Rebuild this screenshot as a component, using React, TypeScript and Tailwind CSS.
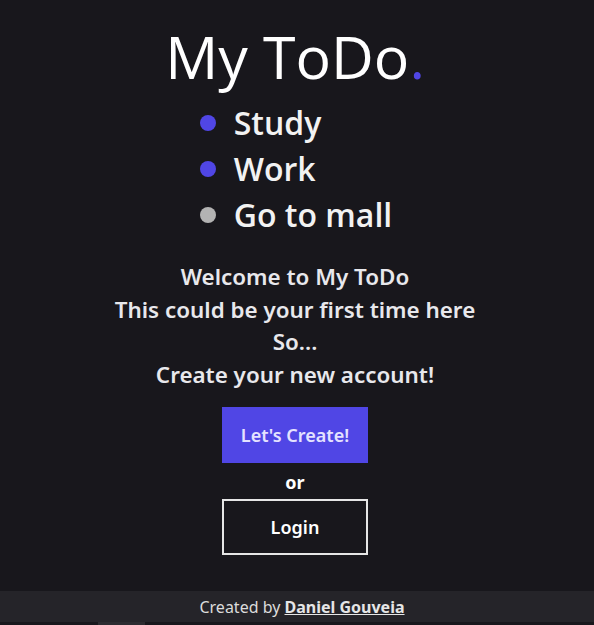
export default function App() {
  const items = [
    { t: "Study", c: "bg-[#5046e5]" },
    { t: "Work", c: "bg-[#5046e5]" },
    { t: "Go to mall", c: "bg-[#b3b3b3]" },
  ];
  return (
    <div className="flex h-[625px] w-full flex-col bg-[#18171c] text-white">
      <main className="flex flex-1 flex-col items-center pr-[4px]">
        <h1
          className="mt-[20px] text-[59px] leading-[72px] font-medium text-white"
          style={{ fontFamily: '"Open Sans", sans-serif' }}
        >
          My ToDo<span className="text-[#5046e5]">.</span>
        </h1>
        <ul
          className="mt-[8px] flex flex-col pl-[2px]"
          style={{ fontFamily: '"Open Sans", sans-serif' }}
        >
          {items.map((i) => (
            <li key={i.t} className="flex h-[46px] items-center gap-[18px]">
              <span className={`h-[16px] w-[16px] rounded-full ${i.c}`} />
              <span className="text-[32px] font-semibold leading-[46px] text-[#f2f2f2]">{i.t}</span>
            </li>
          ))}
        </ul>
        <div
          className="mt-[23px] text-center text-[22.4px] font-semibold leading-[32.5px] text-[#e8e8ec]"
          style={{ fontFamily: '"Noto Sans", sans-serif' }}
        >
          <p>Welcome to My ToDo</p>
          <p>This could be your first time here</p>
          <p>So...</p>
          <p>Create your new account!</p>
        </div>
        <div
          className="mt-[16px] flex flex-col items-center"
          style={{ fontFamily: '"Noto Sans", sans-serif' }}
        >
          <button className="flex h-[56px] w-[146px] items-center justify-center bg-[#5046e5] text-[18px] font-semibold text-[#e4e2ff]">
            Let's Create!
          </button>
          <span className="mt-[8px] mb-[5px] text-[18px] font-bold leading-[23px] text-white">or</span>
          <button className="flex h-[56px] w-[146px] items-center justify-center border-2 border-[#e6e6e6] text-[18px] font-semibold text-white">
            Login
          </button>
        </div>
      </main>
      <footer
        className="flex h-[31px] items-center justify-center bg-[#252429] pl-[10px] text-[16px] text-[#dcdcdc]"
        style={{ fontFamily: '"Noto Sans", sans-serif' }}
      >
        Created by&nbsp;
        <a className="font-bold text-[#e6e6e6] underline">Daniel Gouveia</a>
      </footer>
      <div className="flex h-[3px] bg-[#18171c]">
        <div className="ml-[98px] w-[47px] bg-[#2c2b30]" />
      </div>
    </div>
  );
}
